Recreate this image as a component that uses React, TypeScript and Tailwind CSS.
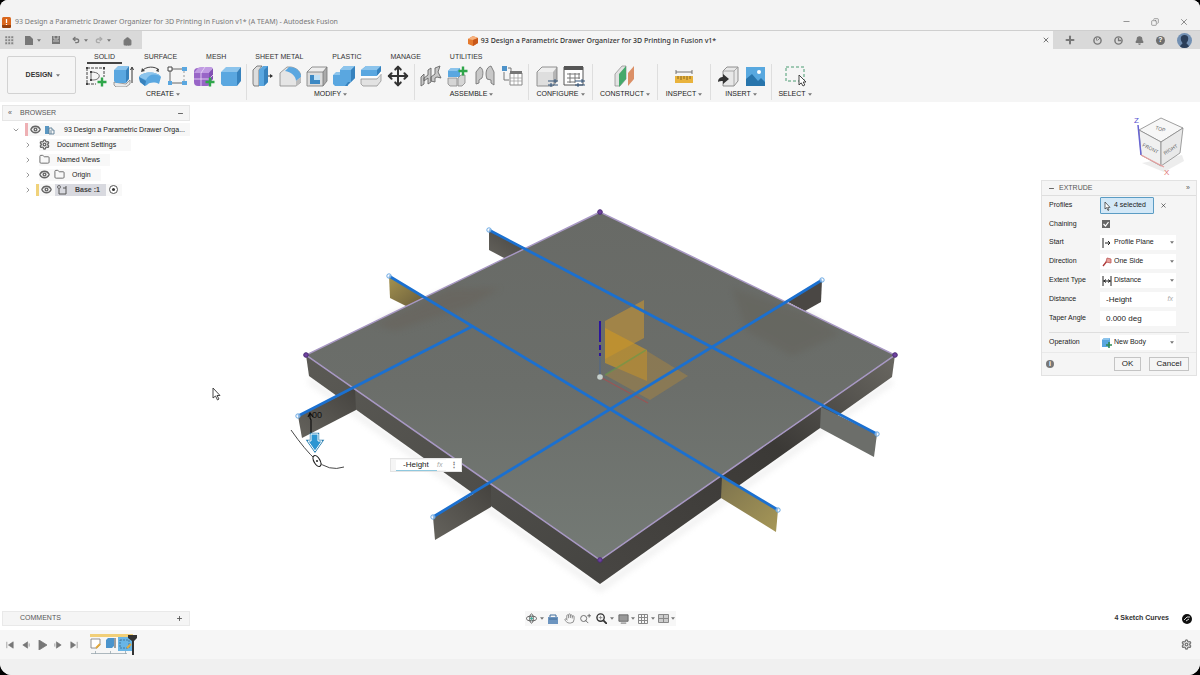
import React from "react";
import { X, Plus, Minus, Copy, Undo2, Redo2, Home, Bell, Settings, Folder, ChevronRight, ChevronDown, Eye, Move, Hand } from "lucide-react";

const Caret = ({ className = "" }: { className?: string }) => (
  <svg viewBox="0 0 6 4" className={`h-[3px] w-[4px] shrink-0 ${className}`} aria-hidden="true">
    <path d="M0 0h6L3 4z" fill="#777" />
  </svg>
);

const Svg = ({ children, className = "size-[22px]", box = "0 0 22 22" }: { children: React.ReactNode; className?: string; box?: string }) => (
  <svg viewBox={box} fill="none" className={`block shrink-0 ${className}`} aria-hidden="true">
    {children}
  </svg>
);

const Cross = ({ x, y, c = "#2fa64a" }: { x: number; y: number; c?: string }) => (
  <path d={`M${x} ${y - 4.5}v9M${x - 4.5} ${y}h9`} stroke={c} strokeWidth="2.4" />
);

const Cube = ({ a, b, c }: { a: string; b: string; c: string }) => (
  <>
    <path d="M1 7l5-5h15l-4 5z" fill={a} />
    <path d="M1 7h16v14H3l-2-2z" fill={b} />
    <path d="M17 7l4-5v14l-4 5z" fill={c} />
  </>
);

const icons: Record<string, React.ReactNode> = {
  sketch: (
    <>
      <path d="M2 3h17v9M2 3v16h9" stroke="#444" strokeWidth="1" strokeDasharray="3 1" />
      <path d="M6 15V7c7 0 9 3 8 5-1 3-5 3-8 3z" stroke="#666" />
      <path d="M1 2h2v2H1zM18 2h2v2h-2zM1 18h2v2H1zM5 6h2v2H5zM5 14h2v2H5z" fill="#444" />
      <Cross x={17} y={17} />
    </>
  ),
  extrude: (
    <>
      <path d="M2 17l12 2 4-4v4l-4 3H4l-2-2z" fill="#e9e9e9" stroke="#777" strokeWidth=".7" />
      <path d="M2 5l4-4h11l-3 4z" fill="#8cc4ec" />
      <path d="M2 5h12v13H4l-2-2z" fill="#5aa7e0" />
      <path d="M14 5l3-4v13l-3 4z" fill="#3782bd" />
      <path d="M20 18V3M18.500 5L20 2l1.500 3" stroke="#333" />
    </>
  ),
  revolve: (
    <>
      <path d="M3 6C7 1 16 1 20 5" stroke="#444" />
      <path d="M2 7l1-4 3 3zM20 7l-1-4-2 3z" fill="#444" />
      <path d="M0 12C3 6 19 6 22 12l-2 7c-4-2-9-2-12 1l-2 1-5-4z" fill="#5aa7e0" />
      <path d="M0 12C3 6 19 6 22 12c-6-4-12-3-15 3z" fill="#8cc4ec" />
      <path d="M0 12l7 4-1 5-5-4z" fill="#3782bd" />
    </>
  ),
  pattern: (
    <>
      <path d="M6 4h11M4 6v11M6 18h11" stroke="#666" />
      <path d="M18 6v10" stroke="#999" strokeDasharray="2 2" />
      <path d="M2 2h4v4H2z" fill="#fff" stroke="#444" />
      <path d="M16 2h5v4h-5zM2 16h4v4H2zM16 16h5v4h-5z" fill="#5aa7e0" />
    </>
  ),
  form: (
    <>
      <rect x="1" y="3" width="17" height="18" rx="4" fill="#9865c7" />
      <path d="M1 8l4-5q1-1 3-1h10q2 0 1 2l-3 4z" fill="#c09be2" />
      <path d="M16 8l4-5v11l-4 5z" fill="#8250b4" />
      <path d="M8 8v13M1 14h15l4-4M12 2L8 8" stroke="#e5d2f5" strokeWidth=".9" />
      <Cross x={17} y={17} />
    </>
  ),
  box: <Cube a="#8cc4ec" b="#5aa7e0" c="#3782bd" />,
  press: (
    <>
      <path d="M1 5l4-4h5L7 5v16H2l-1-2z" fill="#ddd" stroke="#666" strokeWidth=".8" />
      <path d="M7 5l4-4h5v16l-4 4H7z" fill="#5aa7e0" />
      <path d="M12 5l4-4v16l-4 4z" fill="#3782bd" />
      <path d="M16 11h4" stroke="#333" />
      <path d="M18 9l3 2-3 2z" fill="#333" />
    </>
  ),
  fillet: (
    <>
      <path d="M1 21V8l7-6h4c6 1 10 5 10 10v5l-5 4z" fill="#e5e5e5" stroke="#888" strokeWidth=".8" />
      <path d="M10 2c7 0 12 4 12 10l-5 4c0-5-5-9-11-10z" fill="#5aa7e0" />
      <path d="M17 16v5l5-4v-5z" fill="#bcbcbc" />
    </>
  ),
  shell: (
    <>
      <Cube a="#eee" b="#dcdcdc" c="#aaa" />
      <path d="M1 7l5-5h15v14l-4 5H1zM1 7h16v14M17 7l4-5" stroke="#777" strokeWidth=".8" />
      <path d="M4 10h10v9H4z" fill="#fff" />
      <path d="M4 10h4v5l-4 4zM4 19l4-4h6v4z" fill="#3d89c4" />
      <path d="M8 10h6v5H8z" fill="#bfe0f6" />
    </>
  ),
  combine: (
    <>
      <path d="M7 5l4-4h11v12l-4 4h-3v4H2l-2-2v-9h7z" fill="#5aa7e0" />
      <path d="M7 5l4-4h11l-4 4zM0 10l3-3h4v3z" fill="#8cc4ec" />
      <path d="M18 5l4-4v12l-4 4zM12 21l3-4h3l-4 4z" fill="#3782bd" />
    </>
  ),
  split: (
    <>
      <path d="M1 5l5-4h15v5l-4 5H1z" fill="#5aa7e0" />
      <path d="M1 5l5-4h15l-4 4z" fill="#8cc4ec" />
      <path d="M17 5l4-4v5l-4 5z" fill="#3782bd" />
      <path d="M1 14h16l4-5v7l-4 5H3l-2-2z" fill="#e2e2e2" stroke="#888" strokeWidth=".7" />
      <path d="M0 12h17l5-5" stroke="#fff" strokeWidth="1.500" />
    </>
  ),
  joint: (
    <path d="M1 12l3-3v10l-3 2zM8 10V5l3-2v14l-3 2v-6l-4 3v-3zM15 9V3l5-2-2 6 3 6-4-1-2 1v4l-4-1v-4z" fill="#c8c8c8" stroke="#666" strokeWidth=".9" />
  ),
  component: (
    <>
      <path d="M1 6l3-3h9v9H1z" fill="#5aa7e0" />
      <path d="M1 6l3-3h9l-3 3z" fill="#8cc4ec" />
      <path d="M1 13h9v8H3l-2-2zM11 13l3-3h4v8l-3 3h-4z" fill="#d5d5d5" stroke="#888" strokeWidth=".8" />
      <Cross x={16} y={6} />
    </>
  ),
  asbuilt: (
    <path d="M2 19V7l4-5c4 2 3 8 2 11l-3 2v3zM20 20V7l-3-6c-5 1-6 8-4 13l4 1v3z" fill="#c8c8c8" stroke="#777" strokeWidth=".9" />
  ),
  table: (
    <>
      <path d="M1 1h5v5H1z" fill="#4d92c9" />
      <path d="M7 3h3v3M3 7v8h5" stroke="#777" />
      <path d="M9 8h12v12H9z" fill="#fff" stroke="#888" />
      <path d="M9 6h12v3H9z" fill="#777" />
      <path d="M9 13h12M9 16h12M13 9v11M17 9v11" stroke="#999" strokeWidth=".7" />
    </>
  ),
  configure: (
    <>
      <Cube a="#eee" b="#dedede" c="#b5b5b5" />
      <path d="M1 7l5-5h15v14l-4 5H1z" stroke="#777" strokeWidth=".8" />
      <path d="M12 16h10M12 20h10" stroke="#33557a" />
      <path d="M19 14v4M15 18v4" stroke="#33557a" />
    </>
  ),
  configTable: (
    <>
      <path d="M1 2h19v18H1z" fill="#fff" stroke="#555" />
      <path d="M1 1h19v4H1z" fill="#555" />
      <path d="M4 9h13M4 13h13M4 17h8M7 8v10M12 8v10M16 8v6" stroke="#777" />
      <path d="M12 16h10M12 20h10M19 14v4M15 18v4" stroke="#33557a" />
    </>
  ),
  plane: (
    <>
      <path d="M1 9l7-8h4v13l-6 7H1z" fill="#e2e2e2" stroke="#888" strokeWidth=".7" />
      <path d="M5 9l7-8v13l-7 8z" fill="#45a96b" />
      <path d="M14 8l6-7v13l-6 7z" fill="#db8f66" />
    </>
  ),
  measure: (
    <>
      <path d="M3 7h16M3 5v4M19 5v4" stroke="#666" strokeWidth=".9" />
      <path d="M2 11h18v7H2z" fill="#e9b33d" />
      <path d="M5 11v3M8 11v4M11 11v3M14 11v4M17 11v3" stroke="#6f551c" strokeWidth=".8" />
    </>
  ),
  insert: (
    <>
      <path d="M6 6l4-4h11v14l-4 5H6z" fill="#e8e8e8" stroke="#777" strokeWidth=".8" />
      <path d="M6 6h11v15M17 6l4-4" stroke="#999" strokeWidth=".8" />
      <path d="M1 17c0-4 3-5 5-5V9l6 5-6 5v-3c-2 0-4 0-5 1z" fill="#333" />
    </>
  ),
  image: (
    <>
      <path d="M2 2h19v19H2z" fill="#58a8df" />
      <circle cx="15" cy="7" r="2" fill="#fff" />
      <path d="M2 21v-7l6-5 6 7 3-3 4 4v4z" fill="#2875ac" />
    </>
  ),
  select: (
    <>
      <path d="M2 2h18v14H2z" stroke="#4b9c72" strokeDasharray="3 2" />
      <path d="M15 10v10l2.200-2.200L19 21l1.800-1-1.600-3H22z" fill="#fff" stroke="#333" strokeWidth=".9" />
    </>
  ),
};

const groups = [
  { label: "CREATE", w: "w-[167px]", items: ["sketch", "extrude", "revolve", "pattern", "form", "box"] },
  { label: "MODIFY", w: "w-[168px]", items: ["press", "fillet", "shell", "combine", "split", "move"] },
  { label: "ASSEMBLE", w: "w-[114px]", items: ["joint", "component", "asbuilt", "table"] },
  { label: "CONFIGURE", w: "w-[64px]", items: ["configure", "configTable"] },
  { label: "CONSTRUCT", w: "w-[65px]", items: ["plane"] },
  { label: "INSPECT", w: "w-[53px]", items: ["measure"] },
  { label: "INSERT", w: "w-[61px]", items: ["insert", "image"] },
  { label: "SELECT", w: "w-[47px]", items: ["select"] },
];

const tabs = ["SOLID", "SURFACE", "MESH", "SHEET METAL", "PLASTIC", "MANAGE", "UTILITIES"];

function TitleBar() {
  return (
    <header className="flex h-[31px] items-end justify-between border-b border-[#cfcfcf] bg-[#f3f3f3] pr-[11px] pb-[1px] pl-[2px]">
      <div className="flex h-[13px] items-center gap-[4px]">
        <Svg className="h-[11px] w-[9px]" box="0 0 9 11">
          <rect width="9" height="11" rx="1.500" fill="#d9661c" />
          <path d="M0 8h9v2l-1 1H1l-1-1z" fill="#963f0c" />
          <path d="M4.500 2v4M4.500 7v1" stroke="#fff" strokeWidth="1.300" />
        </Svg>
        <h1 className="font-['Noto_Sans',sans-serif] text-[7px] whitespace-nowrap text-[#777]">
          93 Design a Parametric Drawer Organizer for 3D Printing in Fusion v1* (A TEAM) - Autodesk Fusion
        </h1>
      </div>
      <div className="flex h-[15px] items-center gap-[20px] text-[#777]">
        <button aria-label="Minimize"><Minus size={9} strokeWidth={2} /></button>
        <button aria-label="Restore"><Copy size={8} strokeWidth={2} className="-scale-x-100" /></button>
        <button aria-label="Close window"><X size={10} strokeWidth={2} /></button>
      </div>
    </header>
  );
}

function DocumentBar() {
  return (
    <div className="flex h-[18px] bg-[#d9d9d9] text-[#777]">
      <div className="flex w-[142px] items-center pl-[5px]">
        <button aria-label="Data panel">
          <Svg className="size-[9px]" box="0 0 9 9">
            <path d="M0 0h2.500v2.500H0zM3 0h2.500v2.500H3zM6 0h2.500v2.500H6zM0 3h2.500v2.500H0zM3 3h2.500v2.500H3zM6 3h2.500v2.500H6zM0 6h2.500v2.500H0zM3 6h2.500v2.500H3zM6 6h2.500v2.500H6z" fill="#858585" stroke="#d9d9d9" strokeWidth=".5" />
          </Svg>
        </button>
        <button aria-label="File" className="ml-[11px] flex items-center gap-[4px]">
          <Svg className="h-[9px] w-[8px]" box="0 0 8 9"><path d="M0 0h5l3 3v6H0z" fill="#777" /></Svg>
          <Caret />
        </button>
        <button aria-label="Save" className="ml-[11px]">
          <Svg className="size-[8px]" box="0 0 8 8"><path d="M0 0h8v8H0z" fill="#777" /><path d="M2 0v3h4V0M1 5h6" stroke="#d9d9d9" strokeWidth=".8" /></Svg>
        </button>
        <button aria-label="Undo" className="ml-[12px] flex items-center gap-[4px]"><Undo2 size={8} strokeWidth={4} /><Caret /></button>
        <button aria-label="Redo" className="ml-[7px] flex items-center gap-[4px] text-[#aaa]"><Redo2 size={8} strokeWidth={4} /><Caret /></button>
        <button aria-label="Home" className="ml-[12px] pt-[3px]"><Home size={9} fill="#777" strokeWidth={3} /></button>
      </div>
      <div className="flex flex-1 items-center bg-[#f5f5f5] pr-[3px]">
        <div className="flex flex-1 items-center justify-center gap-[3px] pt-[2px]">
          <Svg className="size-[10px]" box="0 0 10 10">
            <path d="M0 3l5-3 5 2v5l-5 3-5-2z" fill="#e57a2e" /><path d="M0 3l5-3 5 2-5 2z" fill="#f6b27f" /><path d="M5 4v6l5-3V2z" fill="#c9581a" />
          </Svg>
          <span className="font-['Noto_Sans',sans-serif] text-[7px] leading-[12px] font-medium whitespace-nowrap text-[#333]">93 Design a Parametric Drawer Organizer for 3D Printing in Fusion v1*</span>
        </div>
        <button aria-label="Close tab"><X size={8} strokeWidth={3} /></button>
      </div>
      <div className="flex w-[147px] items-center justify-between pr-[8px] pl-[11px]">
        <button aria-label="New tab"><Plus size={12} strokeWidth={4} /></button>
        <div className="flex items-center gap-[12px]">
          <button aria-label="Extensions"><Svg className="size-[9px]" box="0 0 10 10"><circle cx="5" cy="5" r="4" stroke="#777" strokeWidth="1.600" /><path d="M5 5l3-3M4 2v3" stroke="#777" /></Svg></button>
          <button aria-label="Job status"><Svg className="size-[9px]" box="0 0 10 10"><circle cx="5" cy="5" r="4" stroke="#777" strokeWidth="1.600" /><path d="M5 2v3h3" stroke="#777" strokeWidth="1.400" /></Svg></button>
          <button aria-label="Notifications"><Bell size={9} fill="#777" strokeWidth={3} /></button>
          <button aria-label="Help" className="flex size-[9px] items-center justify-center rounded-full bg-[#6f6f6f] text-[7px] font-bold text-white">?</button>
          <button aria-label="Account"><Svg className="size-[15px]" box="0 0 16 16"><circle cx="8" cy="8" r="8" fill="#7290b3" /><path d="M4 6a4 4 0 018 0c0 3-2 4-2 5l3 3a8 8 0 01-10 0l3-3c0-1-2-2-2-5z" fill="#2b3e58" /></Svg></button>
        </div>
      </div>
    </div>
  );
}

function Ribbon() {
  return (
    <div className="flex h-[53px] gap-[4px] bg-[#f5f5f5] pl-[7px]">
      <button className="mt-[7px] flex h-[38px] w-[69px] items-center justify-center gap-[4px] rounded-[2px] border border-[#d2d2d2] pl-[3px] text-[7px] font-bold text-[#333]">
        DESIGN <Caret />
      </button>
      <div className="flex flex-col">
        <nav className="flex h-[15px] gap-[15px] pl-[7px]">
          {tabs.map((t, i) => (
            <a key={t} href="#" className={`border-b-2 px-[7px] pt-[2px] text-[7px] leading-[12px] whitespace-nowrap text-[#333] ${i === 0 ? "border-[#444]" : "border-transparent"}`}>{t}</a>
          ))}
        </nav>
        <div className="flex h-[36px]">
          {groups.map((g) => (
            <section key={g.label} className={`flex ${g.w} flex-col items-center border-r border-[#dedede] last:border-transparent`}>
              <div className="flex gap-[5px] pt-[1px]">
                {g.items.map((n) => (
                  <button key={n} aria-label={n}>
                    {n === "move" ? <Move size={22} color="#333" strokeWidth={2.2} /> : <Svg>{icons[n]}</Svg>}
                  </button>
                ))}
              </div>
              <button className="flex items-center gap-[2px] pt-[2px] text-[7px] leading-[10px] text-[#222]">{g.label} <Caret /></button>
            </section>
          ))}
        </div>
      </div>
    </div>
  );
}

const rowText = "pl-[7px] text-[7px] leading-[12px] whitespace-nowrap text-[#222]";

function Browser() {
  return (
    <aside className="w-[188px]">
      <div className="flex h-[16px] items-center border border-[#e6e6e6] bg-[#f5f5f5] px-[5px] text-[7px] text-[#555]">
        <span className="w-[12px]">«</span>
        <h2 className="flex-1">BROWSER</h2>
        <button aria-label="Hide browser"><Minus size={7} strokeWidth={3} /></button>
      </div>
      <ul className="pt-[1px] text-[#666]">
        <li className="flex h-[15px] items-center pl-[10px]">
          <ChevronDown size={8} />
          <div className="ml-[5px] flex h-[13px] flex-1 items-center bg-[#f7f7f7]">
            <i className="mr-[2px] h-[13px] w-[3px] bg-[#eeb0b4]" />
            <Eye size={11} strokeWidth={3} />
            <Svg className="ml-[4px] size-[10px]" box="0 0 10 10"><path d="M0 1h4v8H0z" fill="#5a97c2" /><path d="M4 3h3v2h2v4H4zM6 5v4" stroke="#5a7a92" strokeWidth=".9" /></Svg>
            <span className="pl-[9px] text-[7px] leading-[12px] whitespace-nowrap text-[#222]">93 Design a Parametric Drawer Orga...</span>
          </div>
        </li>
        <li className="flex h-[15px] items-center pl-[22px]">
          <ChevronRight size={8} />
          <div className="ml-[7px] flex items-center bg-[#f8f8f8] pr-[15px]"><Settings size={11} strokeWidth={3} /><span className={rowText}>Document Settings</span></div>
        </li>
        <li className="flex h-[15px] items-center pl-[22px]">
          <ChevronRight size={8} />
          <div className="ml-[7px] flex items-center bg-[#f8f8f8] pr-[10px]"><Folder size={11} /><span className={rowText}>Named Views</span></div>
        </li>
        <li className="flex h-[15px] items-center pl-[22px]">
          <ChevronRight size={8} />
          <div className="ml-[7px] flex items-center bg-[#f8f8f8] pr-[10px]"><Eye size={11} strokeWidth={3} /><Folder size={11} className="ml-[4px]" /><span className={rowText}>Origin</span></div>
        </li>
        <li className="flex h-[15px] items-center pl-[22px]">
          <ChevronRight size={8} />
          <div className="ml-[4px] flex items-center bg-[#f8f8f8] pr-[4px]">
            <i className="mr-[2px] h-[12px] w-[3px] bg-[#f0d27a]" />
            <Eye size={11} strokeWidth={3} />
            <div className="ml-[3px] flex items-center bg-[#d8d9df] pr-[6px] pl-[2px]">
              <Svg className="size-[10px]" box="0 0 10 10"><path d="M2 4v5h7V3H6M9 3V1" stroke="#555" /><circle cx="2" cy="2" r="1.500" stroke="#555" strokeWidth=".8" /></Svg>
              <span className="pl-[8px] text-[7px] leading-[12px] font-bold text-[#444]">Base :1</span>
            </div>
            <label className="ml-[3px] flex size-[9px] items-center justify-center rounded-full border border-[#555] bg-white">
              <input type="radio" defaultChecked aria-label="Activate Base" className="size-[3px] appearance-none rounded-full bg-[#333]" />
            </label>
          </div>
        </li>
      </ul>
    </aside>
  );
}

function ViewCube() {
  return (
    <Svg className="h-[70px] w-[60px]" box="0 0 60 70">
      <path d="M12 54l22 9 20-11-2-6z" fill="#dcdcdc" opacity=".5" />
      <path d="M9 21l22-12 22 10-22 14z" fill="#f7f7f7" stroke="#888" strokeWidth=".8" />
      <path d="M9 21l22 12v24L11 46z" fill="#f0f0f0" stroke="#888" strokeWidth=".8" />
      <path d="M31 33l22-14-3 25-19 13z" fill="#e9e9e9" stroke="#888" strokeWidth=".8" />
      <path d="M8 16l3 30" stroke="#6764d3" strokeWidth="1.500" />
      <path d="M11 46l23 12" stroke="#e8a0a0" strokeWidth="1.300" />
      <g fontFamily="Liberation Sans" fill="#666" fontSize="5">
        <text x="25" y="20" transform="rotate(18 25 20)">TOP</text>
        <text x="12" y="37" transform="rotate(27 12 37)">FRONT</text>
        <text x="35" y="46" transform="rotate(-32 35 46)">RIGHT</text>
        <text x="4" y="14" fontSize="8" fill="#5551cf">Z</text>
        <text x="34" y="66" fontSize="8" fill="#e07070">X</text>
      </g>
    </Svg>
  );
}

const fieldIcons: Record<string, React.ReactNode> = {
  start: <path d="M1 0v10M3 5h5M6 3l2 2-2 2" stroke="#222" />,
  direction: <><path d="M1 9l4-5" stroke="#a33" strokeWidth="1.300" /><path d="M4 5l1-4 4 1v4z" fill="#e7a19b" stroke="#b55" strokeWidth=".8" /></>,
  extent: <path d="M1 0v10M9 0v10M1 5h8M4 3.500L2 5l2 1.500M6 3.500L8 5 6 6.500" stroke="#222" />,
  body: <><path d="M0 2l2-2h6v7L7 9H0z" fill="#5aa7e0" /><path d="M0 2l2-2h6L7 2z" fill="#8cc4ec" /><path d="M7 4v6M4 7h6" stroke="#2f8a55" strokeWidth="1.600" /></>,
};

function SelectRow({ id, label, value, icon }: { id: string; label: string; value: string; icon: string }) {
  return (
    <div className="flex h-[19px] items-center">
      <label htmlFor={id} className="w-[51px]">{label}</label>
      <div className="flex h-[15px] w-[76px] items-center bg-white px-[2px]">
        <Svg className="size-[10px]" box="0 0 10 10">{fieldIcons[icon]}</Svg>
        <select id={id} className="min-w-0 flex-1 appearance-none bg-transparent pl-[2px] text-[7px] text-[#222]"><option>{value}</option></select>
        <Caret />
      </div>
    </div>
  );
}

function ExtrudePanel() {
  return (
    <form className="mt-[1px] w-[156px] border border-[#e2e2e2] bg-[#f5f5f5] text-[7px] text-[#222]">
      <div className="flex h-[15px] items-center border-b border-[#dedede] px-[6px] text-[#555]">
        <Minus size={7} strokeWidth={3} /><h2 className="flex-1 pl-[4px]">EXTRUDE</h2><span>»</span>
      </div>
      <div className="px-[7px]">
        <div className="flex h-[19px] items-center">
          <span className="w-[51px]">Profiles</span>
          <button type="button" className="flex h-[17px] w-[54px] items-center gap-[3px] rounded-[1px] border border-[#5b9cc4] bg-[#d3e8f7] px-[3px]">
            <Svg className="h-[10px] w-[7px]" box="0 0 7 10"><path d="M1 1v7l1.600-1.400L4 9.500l1-.5-1.300-2.600H6z" fill="#fff" stroke="#444" strokeWidth=".8" /></Svg>
            4 selected
          </button>
          <button type="button" aria-label="Clear profiles" className="pl-[6px]"><X size={7} /></button>
        </div>
        <div className="flex h-[18px] items-center">
          <label htmlFor="chain" className="w-[51px]">Chaining</label>
          <div className="grid pl-[2px]">
            <input id="chain" type="checkbox" defaultChecked className="col-start-1 row-start-1 size-[8px] appearance-none bg-[#666]" />
            <Svg className="pointer-events-none col-start-1 row-start-1 size-[8px]" box="0 0 8 8"><path d="M1.500 4l2 2 3-4" stroke="#fff" strokeWidth="1.200" /></Svg>
          </div>
        </div>
        <SelectRow id="start" label="Start" value="Profile Plane" icon="start" />
        <SelectRow id="dir" label="Direction" value="One Side" icon="direction" />
        <SelectRow id="ext" label="Extent Type" value="Distance" icon="extent" />
        <div className="flex h-[19px] items-center">
          <label htmlFor="dist" className="w-[51px]">Distance</label>
          <div className="flex h-[15px] w-[76px] items-center bg-white pr-[3px] pl-[6px]">
            <input id="dist" defaultValue="-Height" className="w-0 flex-1 text-[8px] text-[#222]" /><span className="text-[#aaa] italic">fx</span>
          </div>
        </div>
        <div className="flex h-[19px] items-center">
          <label htmlFor="taper" className="w-[51px]">Taper Angle</label>
          <input id="taper" defaultValue="0.000 deg" className="h-[15px] w-[76px] bg-white pl-[6px] text-[8px] text-[#222]" />
        </div>
        <div className="mt-[4px] border-t border-[#dedede]">
          <SelectRow id="op" label="Operation" value="New Body" icon="body" />
        </div>
      </div>
      <div className="flex h-[23px] items-center border-t border-[#e9e9e9] pr-[7px] pl-[4px] text-[8px]">
        <span className="flex size-[8px] items-center justify-center rounded-full bg-[#777] text-[7px] font-bold text-white">i</span>
        <button type="button" className="ml-auto h-[14px] w-[27px] border border-[#c4c4c4]">OK</button>
        <button type="button" className="ml-[8px] h-[14px] w-[40px] border border-[#c4c4c4]">Cancel</button>
      </div>
    </form>
  );
}

const ends = [[489, 230], [389, 276], [822, 280], [877, 434], [778, 510], [433, 517], [298, 416]];
const corners = [[600, 212], [306, 355], [895, 355], [600, 560]];

function Scene() {
  return (
    <svg viewBox="0 102 1200 528" className="absolute inset-0 size-full" aria-label="Drawer base model">
      <defs>
        <linearGradient id="top" x1="0" y1="0" x2="0" y2="1"><stop offset="0" stopColor="#686a66" /><stop offset=".5" stopColor="#6b6e6a" /><stop offset="1" stopColor="#747a75" /></linearGradient>
        <linearGradient id="sideL" x1="0" y1="0" x2="1" y2="1"><stop offset="0" stopColor="#5b5a55" /><stop offset="1" stopColor="#454441" /></linearGradient>
        <linearGradient id="sideR" x1="0" y1="1" x2="1" y2="0"><stop offset="0" stopColor="#484643" /><stop offset=".6" stopColor="#3b3936" /><stop offset="1" stopColor="#6a6862" /></linearGradient>
        <linearGradient id="tab" x1="0" y1="1" x2="1" y2="0"><stop offset="0" stopColor="#65635d" /><stop offset="1" stopColor="#45433f" /></linearGradient>
        <linearGradient id="gold" x1="0" y1="0" x2="1" y2="1"><stop offset="0" stopColor="#7d734e" /><stop offset="1" stopColor="#a69757" /></linearGradient>
        <linearGradient id="gold2" x1="0" y1="0" x2="1" y2="1"><stop offset="0" stopColor="#a5934f" /><stop offset="1" stopColor="#65593a" /></linearGradient>
        <filter id="soft"><feGaussianBlur stdDeviation="3" /></filter>
      </defs>
      <path d="M309 380L600 589 892 381" stroke="#ccc" strokeWidth="5" fill="none" opacity=".35" filter="url(#soft)" />
      <path d="M489 230v20l17 9 21-10z" fill="url(#tab)" />
      <path d="M389 276l1 22 18 9 19-9z" fill="url(#gold2)" />
      <path d="M822 280l-1 22-16 9-19-10z" fill="#4a4744" />
      <path d="M306 355l3 21 291 208V560z" fill="url(#sideL)" />
      <path d="M895 355l-3 22-292 207V560z" fill="url(#sideR)" />
      <path d="M600 212L306 355l294 205 295-205z" fill="url(#top)" />
      <path d="M375 324l74-35 51-1-30 18-75 25z" fill="#675d53" opacity=".35" filter="url(#soft)" />
      <path d="M732 288l76 26 32 20-48 22-45-25z" fill="#605b51" opacity=".3" filter="url(#soft)" />
      <path d="M821 407l56 27-3 23-54-29z" fill="#6c6e6a" />
      <path d="M722 477l56 33-2 22-55-34z" fill="url(#gold)" />
      <path d="M433 517l2 23 56-33v-23z" fill="url(#tab)" />
      <path d="M298 416l4 22 54-28-1-22z" fill="url(#tab)" />
      <path d="M600 212L306 355l294 205 295-205z" fill="none" stroke="#a898c4" strokeWidth="1.500" />
      <path d="M605 321l39-21v38l-39 21z" fill="#b98f3a" opacity=".7" />
      <path d="M605 328l42 22v31l-42-18z" fill="#c99628" opacity=".7" />
      <path d="M605 375l42-24 41 25-38 24z" fill="#a8843f" opacity=".5" />
      <path d="M605 375l41-25" stroke="#649a4b" strokeWidth="1.500" opacity=".6" />
      <path d="M602 378l46 25" stroke="#9a5555" strokeWidth="1.200" />
      <path d="M489 230l388 204M389 276l389 234M822 280L433 517M473 326L298 416" stroke="#1b70d0" strokeWidth="2.800" fill="none" />
      <path d="M600 321v21M600 345v5M600 353v3" stroke="#2b159c" strokeWidth="2" />
      <path d="M600 357v18" stroke="#4d6690" />
      <circle cx="600" cy="377" r="2.800" fill="#c6d0cc" />
      {ends.map(([x, y]) => <circle key={x} cx={x} cy={y} r="2.200" fill="#ffffff88" stroke="#5a9fe0" strokeWidth=".9" />)}
      {corners.map(([x, y]) => <circle key={`${x}-${y}`} cx={x} cy={y} r="2.300" fill="#7042a0" stroke="#4b2c76" />)}
      <text x="312" y="418" fontFamily="Liberation Sans" fontSize="9" fill="#111">00</text>
      <path d="M310 414v4l1 2v13M308 417l2-4 3 4" stroke="#111" strokeWidth="1.200" fill="none" />
      <path d="M311 434h7v7h4l-7 10-7-10h3z" fill="#2c96d2" stroke="#287eaf" strokeWidth="2.400" />
      <path d="M311 434h7v7h4l-7 10-7-10h3z" fill="#2c96d2" stroke="#fff" />
      <path d="M291 430q14 20 25 30 13 12 28 7" fill="none" stroke="#333" strokeWidth=".9" />
      <ellipse cx="317" cy="461" rx="3" ry="6" transform="rotate(-30 317 461)" fill="#fff" stroke="#222" strokeWidth="1.200" />
      <circle cx="317" cy="461" r="1" fill="#222" />
      <path d="M213 388v10l2.500-2 2 4 1.500-1-2-3.500h3z" fill="#fff" stroke="#333" strokeWidth=".9" />
    </svg>
  );
}

function NavBar() {
  return (
    <div className="flex h-[15px] items-center bg-[#f7f7f7] px-[1px] text-[#888]">
      <button aria-label="Orbit" className="flex items-center gap-[3px]"><Svg className="size-[11px]" box="0 0 12 12"><ellipse cx="6" cy="6" rx="5.500" ry="2.500" stroke="#555" /><ellipse cx="6" cy="6" rx="2" ry="5" stroke="#555" /><path d="M6 4v4M4 6h4" stroke="#4a9" /></Svg><Caret /></button>
      <button aria-label="Look at" className="ml-[4px]"><Svg className="size-[10px]" box="0 0 10 10"><path d="M0 3h10v7H0z" fill="#6d95c0" /><path d="M2 3V1h6v2M1 5h8" stroke="#3f6c9a" /></Svg></button>
      <button aria-label="Pan" className="ml-[6px]"><Hand size={11} /></button>
      <button aria-label="Zoom" className="ml-[5px]"><Svg className="size-[11px]" box="0 0 12 12"><circle cx="4" cy="6" r="3.300" stroke="#666" /><path d="M6 8l3 3M10 1v4M8 3h4" stroke="#666" /></Svg></button>
      <button aria-label="Fit" className="ml-[5px] flex items-center gap-[3px]"><Svg className="size-[11px]" box="0 0 12 12"><circle cx="5" cy="5" r="4" stroke="#333" strokeWidth="1.500" /><path d="M3 5h4M5 3v4" stroke="#888" /><path d="M8 8l4 4" stroke="#333" strokeWidth="2" /></Svg><Caret /></button>
      <button aria-label="Display settings" className="ml-[4px] flex items-center gap-[2px]"><Svg className="size-[11px]" box="0 0 12 12"><path d="M1 2h10v7H1z" fill="#999" stroke="#666" /><path d="M3 11h6" stroke="#666" /></Svg><Caret /></button>
      <button aria-label="Grid" className="ml-[3px] flex items-center gap-[3px]"><Svg className="size-[10px]" box="0 0 10 10"><path d="M.5 .5h9v9h-9zM.5 3.500h9M.5 6.500h9M3.500 .5v9M6.500 .5v9" stroke="#888" /></Svg><Caret /></button>
      <button aria-label="Viewports" className="ml-[3px] flex items-center gap-[2px]"><Svg className="size-[11px]" box="0 0 11 11"><path d="M.5 1.500h10v8H.5z" fill="#ccc" stroke="#888" /><path d="M5.500 1v9M1 5.500h9" stroke="#888" /></Svg><Caret /></button>
    </div>
  );
}

function Timeline() {
  const paths = [
    "M1 1v8M9 1v8L3 5z", "M7 1v8L1 5zM9 3v4", "M2 0v10l8-5z", "M3 1v8l6-4zM1 3v4", "M9 1v8M1 1v8l6-4z",
  ];
  const names = ["Go to start", "Step back", "Play", "Step forward", "Go to end"];
  return (
    <footer className="h-[45px] bg-[#f0f0f0]">
      <div className="flex h-[29px] items-center justify-between bg-[#f6f6f6] pr-[8px] pl-[5px]">
        <div className="flex items-center">
          <div className="flex items-center gap-[6px]">
            {paths.map((d, i) => <button key={d} aria-label={names[i]}><Svg className={i === 2 ? "size-[10px]" : "h-[8px] w-[10px]"} box="0 0 10 10"><path d={d} fill="#777" stroke="#777" strokeWidth=".8" /></Svg></button>)}
          </div>
          <Svg className="ml-[10px] h-[23px] w-[50px]" box="0 0 50 23">
            <path d="M1 1h43v3H1z" fill="#f1cf78" />
            <path d="M29 4h14v14H29z" fill="#68b5e6" />
            <path d="M2 6h9v6l-3 3H2z" fill="#fff" stroke="#777" strokeWidth=".8" />
            <path d="M31 7h9v8h-9z" stroke="#3c6a8a" strokeWidth=".8" strokeDasharray="2 1" />
            <path d="M7 15l4-4M38 15l4-4" stroke="#e4a93b" strokeWidth="1.800" />
            <path d="M17 7l2-2h6v8l-2 2h-6z" fill="#4b94cc" /><path d="M26 5v10" stroke="#444" />
            <path d="M2 20.500h36M6.500 18v3M21.500 18v3M36.500 18v3" stroke="#9aa8b0" strokeWidth=".8" />
            <path d="M39 2h9v3l-3 3v14h-2V8l-4-3z" fill="#333" />
          </Svg>
        </div>
        <button aria-label="Timeline settings"><Settings size={11} color="#777" strokeWidth={3} /></button>
      </div>
    </footer>
  );
}

export default function App() {
  return (
    <div className="min-h-screen bg-black">
      <div className="flex min-h-screen flex-col overflow-hidden rounded-t-lg rounded-b-xl bg-white font-['Liberation_Sans',Arial,sans-serif]">
        <TitleBar />
        <DocumentBar />
        <Ribbon />
        <main className="relative flex flex-1 flex-col justify-between">
          <Scene />
          <div className="absolute top-[356px] left-[32.5%] flex h-[14px] w-[72px] items-center border border-[#e4e4e4] bg-[#f5f5f5] text-[#777]">
            <input aria-label="Height expression" defaultValue="-Height" className="ml-[5px] h-[11px] w-[41px] border-b border-[#8fc8de] bg-white pl-[7px] text-[8px] text-[#222]" />
            <span className="bg-white pr-[4px] text-[7px] text-[#aaa] italic">fx</span>
            <button aria-label="More options" className="flex h-full flex-1 items-center justify-center bg-white text-[8px] font-bold">⋮</button>
          </div>
          <div className="relative flex items-start justify-between pt-[3px] pr-[3px] pl-[2px]">
            <Browser />
            <div className="flex flex-col items-end pt-[4px]">
              <div className="pr-[7px]"><ViewCube /></div>
              <ExtrudePanel />
            </div>
          </div>
          <div className="relative grid grid-cols-3 items-center pb-[4px] pl-[2px]">
            <div className="flex h-[15px] w-[188px] items-center justify-between border border-[#e9e9e9] bg-[#f5f5f5] pr-[6px] pl-[17px] text-[7px] text-[#555]">
              <h2>COMMENTS</h2>
              <button aria-label="Expand comments"><Plus size={7} strokeWidth={3} /></button>
            </div>
            <div className="flex justify-center"><NavBar /></div>
            <div className="flex items-center justify-end gap-[13px] pr-[8px]">
              <span className="text-[7px] font-bold text-[#333]">4 Sketch Curves</span>
              <Svg className="size-[10px]" box="0 0 10 10"><circle cx="5" cy="5" r="5" fill="#111" /><path d="M2 6l3-3h3M4 7l3-2" stroke="#ddd" /></Svg>
            </div>
          </div>
        </main>
        <Timeline />
      </div>
    </div>
  );
}
